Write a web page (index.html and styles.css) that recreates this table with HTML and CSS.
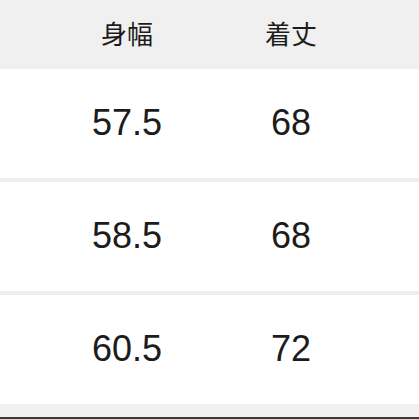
FILE: index.html
```html
<!DOCTYPE html>
<html lang="ja">
<head>
<meta charset="utf-8">
<link rel="stylesheet" href="styles.css">
</head>
<body>
<div class="table">
  <div class="row head">
    <div class="cell">身幅</div>
    <div class="cell">着丈</div>
  </div>
  <div class="row body">
    <div class="cell">57.5</div>
    <div class="cell">68</div>
  </div>
  <div class="sep"></div>
  <div class="row body">
    <div class="cell">58.5</div>
    <div class="cell">68</div>
  </div>
  <div class="sep"></div>
  <div class="row body">
    <div class="cell">60.5</div>
    <div class="cell">72</div>
  </div>
  <div class="foot"></div>
</div>
</body>
</html>
```
FILE: styles.css
```css
html, body {
  margin: 0;
  padding: 0;
  background: #ffffff;
}
.table {
  width: 419px;
  height: 419px;
  display: flex;
  flex-direction: column;
  font-family: "Liberation Sans", "Noto Sans CJK JP", sans-serif;
  color: #1c1c1c;
}
.row {
  display: grid;
  grid-template-columns: 164px 164px;
  padding-left: 45px;
  align-items: center;
}
.cell {
  text-align: center;
}
.head {
  height: 69px;
  background: #f0f0f0;
  font-family: "Noto Sans CJK JP", sans-serif;
  font-size: 26px;
  padding-bottom: 4px;
  box-sizing: border-box;
}
.body {
  height: 109px;
  font-size: 36px;
  padding-bottom: 2px;
  box-sizing: border-box;
  background: #ffffff;
}
.sep {
  height: 4px;
  background: #eeeeee;
}
.foot {
  flex: 1;
  background: #f0f0f0;
  border-bottom: 2px solid #3a3a3a;
}
```
